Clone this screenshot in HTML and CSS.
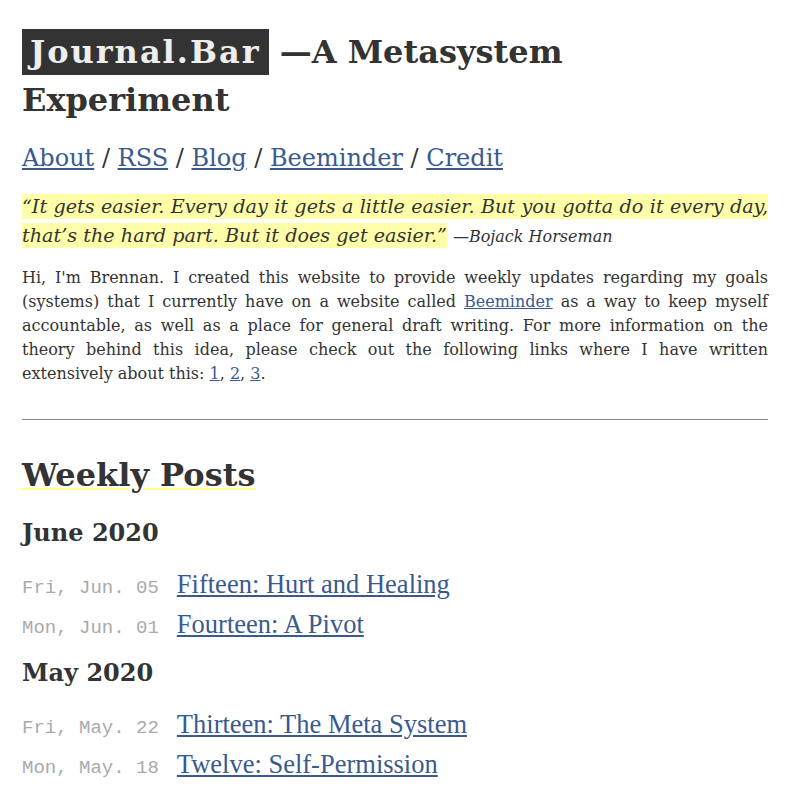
FILE: index.html
```html
<!DOCTYPE html>
<html>
<head>
<meta charset="utf-8">
<link rel="stylesheet" href="styles.css">
</head>
<body>
<main class="page">
  <h1 class="title"><span class="brand">Journal.Bar</span> —A Metasystem Experiment</h1>
  <nav class="nav"><a href="#">About</a> / <a href="#">RSS</a> / <a href="#">Blog</a> / <a href="#">Beeminder</a> / <a href="#">Credit</a></nav>
  <p class="quote"><span class="quote-text">“It gets easier. Every day it gets a little easier. But you gotta do it every day, that’s the hard part. But it does get easier.”</span> <span class="quote-by">—Bojack Horseman</span></p>
  <p class="intro">Hi, I'm Brennan. I created this website to provide weekly updates regarding my goals (systems) that I currently have on a website called <a href="#">Beeminder</a> as a way to keep myself accountable, as well as a place for general draft writing. For more information on the theory behind this idea, please check out the following links where I have written extensively about this: <a href="#">1</a>, <a href="#">2</a>, <a href="#">3</a>.</p>
  <hr class="rule">
  <h2 class="section">Weekly Posts</h2>
  <h3 class="month">June 2020</h3>
  <ul class="posts">
    <li class="post"><span class="date">Fri, Jun. 05</span><a class="post-link" href="#">Fifteen: Hurt and Healing</a></li>
    <li class="post"><span class="date">Mon, Jun. 01</span><a class="post-link" href="#">Fourteen: A Pivot</a></li>
  </ul>
  <h3 class="month">May 2020</h3>
  <ul class="posts">
    <li class="post"><span class="date">Fri, May. 22</span><a class="post-link" href="#">Thirteen: The Meta System</a></li>
    <li class="post"><span class="date">Mon, May. 18</span><a class="post-link" href="#">Twelve: Self-Permission</a></li>
  </ul>
</main>
</body>
</html>
```
FILE: styles.css
```css
html, body {
  margin: 0;
  padding: 0;
  background: #fff;
}
body {
  font-family: "DejaVu Serif", serif;
  color: #333;
}
.page {
  padding: 22px 22px 40px;
}
a {
  color: #3a5a8f;
}
.title {
  font-size: 32px;
  line-height: 48px;
  margin: 6px 0 0;
  font-weight: bold;
}
.brand {
  background: #333;
  color: #eee;
  padding: 4px 8px 4px 8px;
  letter-spacing: 2px;
}
.nav {
  margin-top: 18px;
  font-size: 24px;
  line-height: 32px;
}
.quote {
  margin: 18px 0 0;
  font-size: 19.2px;
  line-height: 29px;
  font-style: italic;
  text-align: justify;
}
.quote-text {
  background: #ffffaa;
  padding: 1px 0;
}
.quote-by {
  font-size: 16px;
}
.intro {
  margin: 15px 0 0;
  font-size: 16px;
  line-height: 24px;
  text-align: justify;
}
.rule {
  border: 0;
  border-top: 1px solid #888;
  margin: 33px 0 0;
}
.section {
  font-size: 32px;
  margin: 35px 0 0;
  line-height: 40px;
  text-decoration: underline;
  text-decoration-color: #ffff88;
  text-decoration-thickness: 2px;
  text-underline-offset: 2px;
}
.month {
  font-size: 24px;
  margin: 13px 0 0;
  line-height: 32px;
}
.section + .month {
  margin-top: 22px;
}
.posts {
  list-style: none;
  margin: 15px 0 0;
  padding: 0;
}
.post {
  line-height: 40px;
  height: 40px;
  white-space: nowrap;
}
.date {
  display: inline-block;
  font-family: "Liberation Mono", monospace;
  font-size: 19px;
  color: #aaa;
  margin-right: 18px;
}
.post-link {
  font-family: "Liberation Serif", serif;
  font-size: 26.5px;
}
```
